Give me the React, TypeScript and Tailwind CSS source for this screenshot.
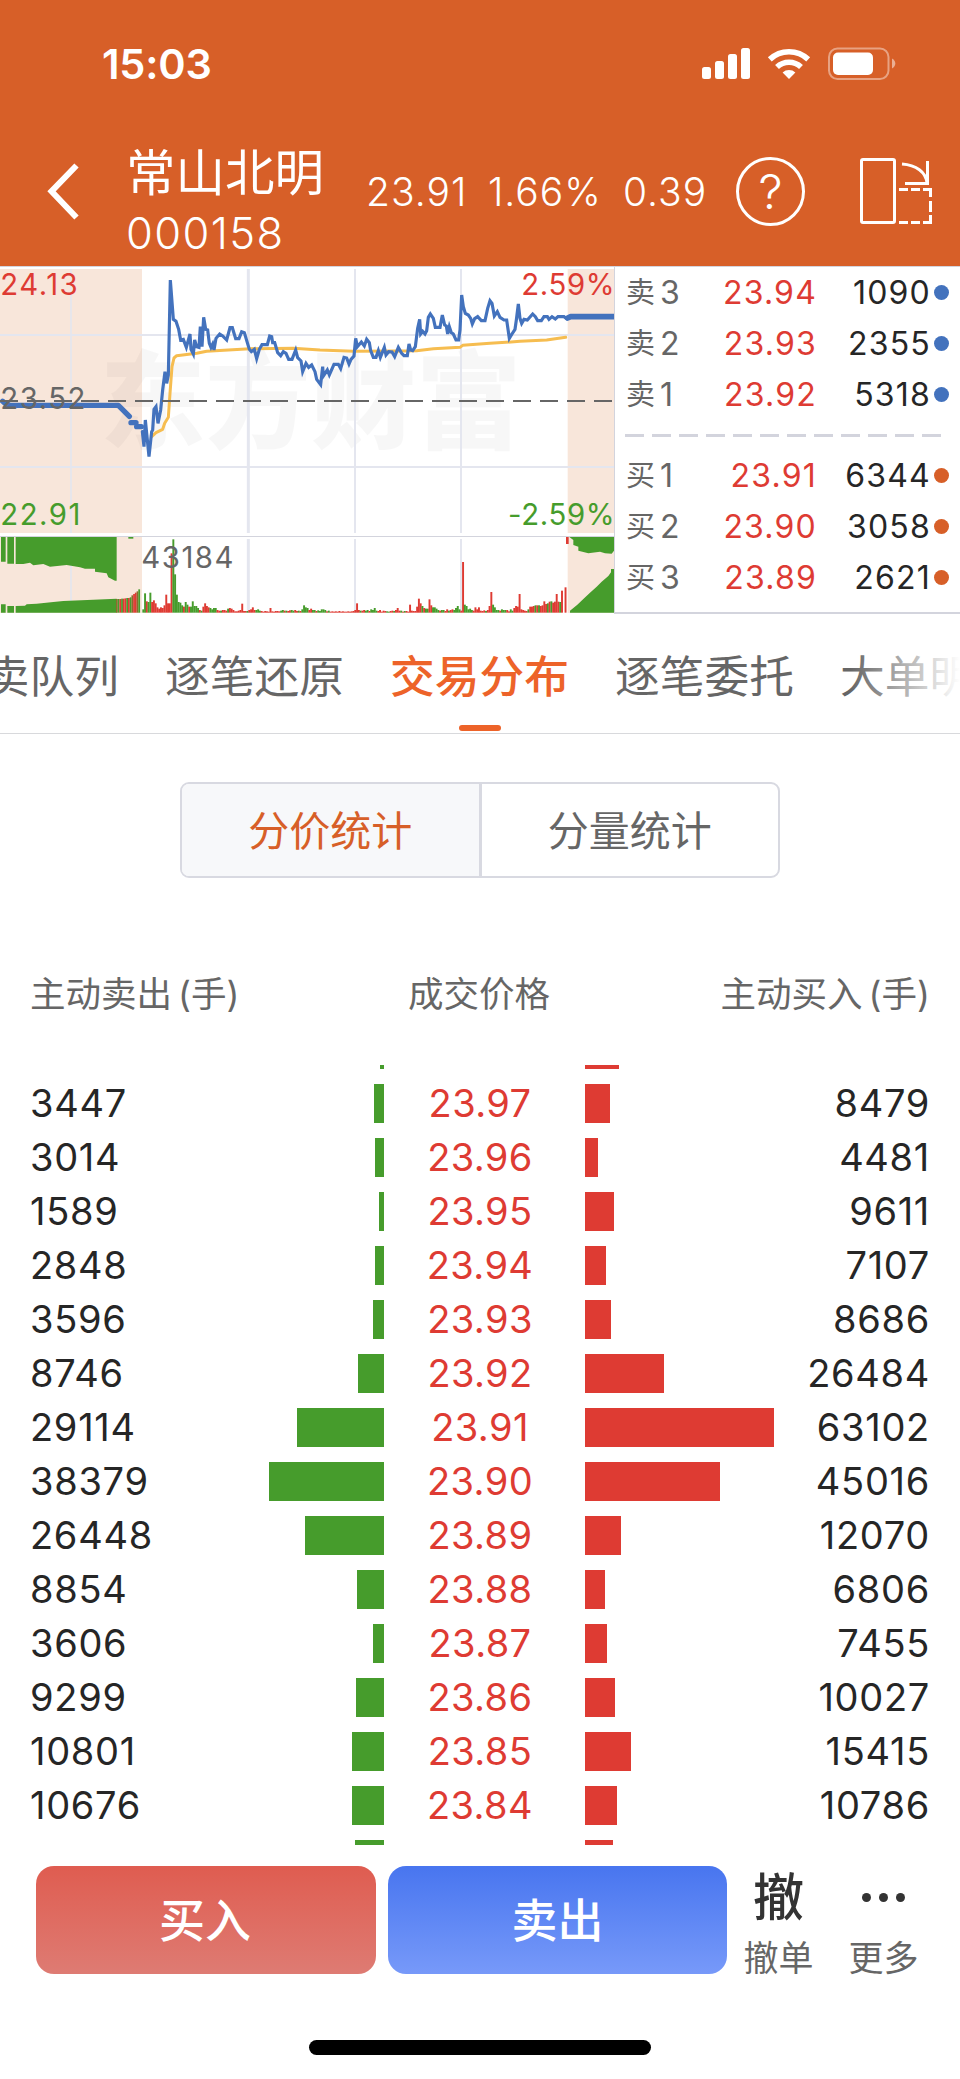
import clsx from "clsx";

const asks = [
  { label: "卖", level: 3, price: "23.94", volume: 1090 },
  { label: "卖", level: 2, price: "23.93", volume: 2355 },
  { label: "卖", level: 1, price: "23.92", volume: 5318 },
];

const bids = [
  { label: "买", level: 1, price: "23.91", volume: 6344 },
  { label: "买", level: 2, price: "23.90", volume: 3058 },
  { label: "买", level: 3, price: "23.89", volume: 2621 },
];

const tabs = ["买卖队列", "逐笔还原", "交易分布", "逐笔委托", "大单明细"];

const rows = [
  { price: "23.97", sell: 3447, buy: 8479 },
  { price: "23.96", sell: 3014, buy: 4481 },
  { price: "23.95", sell: 1589, buy: 9611 },
  { price: "23.94", sell: 2848, buy: 7107 },
  { price: "23.93", sell: 3596, buy: 8686 },
  { price: "23.92", sell: 8746, buy: 26484 },
  { price: "23.91", sell: 29114, buy: 63102 },
  { price: "23.90", sell: 38379, buy: 45016 },
  { price: "23.89", sell: 26448, buy: 12070 },
  { price: "23.88", sell: 8854, buy: 6806 },
  { price: "23.87", sell: 3606, buy: 7455 },
  { price: "23.86", sell: 9299, buy: 10027 },
  { price: "23.85", sell: 10801, buy: 15415 },
  { price: "23.84", sell: 10676, buy: 10786 },
];

// px per traded lot
const BAR_SCALE = 0.003;

const PRICE_LINE =
  "427,515 432,560 436,480 447,590 455,515 458,510 462,448 468,440 474,490 482,450 488,390 495,335 500,370 505,345 511,60 520,178 528,184 536,208 542,240 550,238 559,262 570,222 573,268 580,282 584,240 590,260 597,262 601,200 606,260 611,172 617,208 623,210 628,250 633,262 638,252 642,270 648,235 659,222 668,228 680,240 690,203 697,203 707,236 717,236 725,215 733,218 748,268 754,275 763,268 770,296 778,268 786,254 802,254 809,228 815,230 818,248 824,248 833,278 842,287 850,275 858,280 866,298 876,298 887,270 893,293 903,303 908,335 918,310 926,322 935,315 945,335 950,358 962,374 968,320 970,348 982,330 988,345 1002,313 1015,313 1022,326 1032,292 1040,294 1047,312 1053,298 1062,288 1067,235 1072,260 1084,246 1093,258 1100,238 1108,248 1112,272 1120,292 1128,292 1135,272 1141,292 1153,262 1158,285 1166,275 1176,276 1184,290 1195,262 1205,280 1212,287 1222,287 1227,252 1232,270 1238,272 1246,260 1253,205 1259,178 1262,222 1268,214 1275,222 1280,212 1285,172 1291,162 1300,175 1306,202 1320,202 1327,165 1334,195 1339,198 1343,222 1348,200 1354,218 1360,222 1368,240 1376,240 1380,210 1385,105 1390,140 1396,160 1405,165 1412,175 1417,192 1424,176 1433,170 1444,182 1455,182 1463,145 1470,122 1476,130 1483,168 1492,155 1500,172 1512,180 1520,180 1528,235 1536,222 1545,208 1549,180 1555,132 1560,175 1565,190 1572,178 1582,180 1598,162 1606,170 1613,182 1624,182 1632,170 1642,170 1647,178 1656,170 1666,177 1674,170 1692,170 1700,176";

const AVG_LINE =
  "455,530 468,518 488,508 494,490 505,472 510,400 516,320 522,294 530,287 590,280 620,274 750,266 880,265 960,270 1060,274 1200,273 1250,272 1300,266 1380,262 1388,256 1470,250 1560,244 1640,240 1697,232";

// One entry per minute; negative values are falling minutes (green)
const minuteVolume = [
  -10, -58, 34, -32, -60, 32, 37, 28, 16, 12, 16, 14, 22, 54, 28, 28, 178, -220, -115, -54,
  -32, -30, -22, 18, -32, -24, 18, -18, -34, -20, -20, -14, 8, -6, 18, 28, 20, 16, -14, -10,
  -14, -14, 8, 6, -6, 8, 8, 6, -12, 14, 12, 8, 4, 4, 6, 8, 27, 5, 5, -5,
  8, 10, 16, 8, -8, -10, -6, 5, 3, 5, 4, 3, 14, 4, 3, 5, 5, 4, -6, -8,
  6, -6, 5, 7, -8, -6, 8, 5, -6, 5, -10, -22, -16, -14, 8, 12, -8, -8, 5, -7,
  -5, -10, -10, -8, 4, -6, 3, 4, 3, 4, 3, 5, 3, 4, 3, 3, 4, 3, 4, 5,
  8, 28, 8, -6, 6, 8, -6, -8, 5, -10, -8, -14, -6, 5, 8, 3, 6, 5, -4, -3,
  5, 6, -5, 8, 14, 6, -6, 3, -5, 5, 3, 24, 6, 5, 5, 18, 42, 28, -20, 14,
  -12, -12, 40, 22, -16, -16, -12, -8, 6, -8, -8, 5, 10, -6, 8, 10, -8, -14, -20, -10,
  6, 152, -24, -20, -10, -12, -8, 6, 16, 10, 16, 6, 5, 7, -5, 8, 20, 62, -24, -16,
  -8, -8, 6, -10, -8, -8, 8, 4, -10, -6, 14, 20, 18, 56, 10, 8, 6, 5, -10, 18,
  18, 20, -22, 22, -22, 20, 22, 34, 26, -28, 33, -34, 30, 33, 56, 33, -32, 66, 0, 76,
];

// Opening auction bars left of 9:30
const auctionVolume = [41, -41, 41, -42, 42, 43, -44, 44, -46, 52, 56, 60, 64, -70];

function StatusIcons() {
  return (
    <svg width="196" height="36" viewBox="700 46 196 36" className="mt-[46px]">
      <g fill="white">
        <rect x="702" y="67" width="9" height="12" rx="2.5" />
        <rect x="715" y="61" width="9" height="18" rx="2.5" />
        <rect x="728" y="54" width="9" height="25" rx="2.5" />
        <rect x="741" y="48" width="9" height="31" rx="2.5" />
        <path d="M789 79 L782.6 72.4 A9.5 9.5 0 0 1 795.4 72.4 Z" />
      </g>
      <g fill="none" stroke="white" strokeWidth="5.6">
        <path d="M777 67 A17.5 17.5 0 0 1 801 67" />
        <path d="M769.8 59.4 A28 28 0 0 1 808.2 59.4" />
      </g>
      <rect x="829" y="48.5" width="59.5" height="30.5" rx="8.5" fill="none" stroke="white" strokeOpacity="0.42" strokeWidth="2" />
      <rect x="833" y="52.5" width="40" height="22.5" rx="5" fill="white" />
      <path d="M892 58.5 Q895.3 60.5 895.3 63.5 Q895.3 66.5 892 68.5 Z" fill="white" fillOpacity="0.5" />
    </svg>
  );
}

function Header() {
  return (
    <header className="h-[266px] bg-[#d75f28] text-white">
      <div className="flex h-[128px] justify-between pr-[64px] pl-[102px]">
        <span className="mt-[39px] text-[41.5px] leading-[50px] font-semibold tracking-[-0.2px]">15:03</span>
        <StatusIcons />
      </div>
      <div className="flex h-[138px] items-start">
        <svg width="34" height="60" viewBox="46 162 34 60" className="mt-[34px] ml-[46px]">
          <path d="M76.5 165.5 L51.5 191.3 L76.5 217.5" fill="none" stroke="white" strokeWidth="6" />
        </svg>
        <div className="mt-[20px] ml-[46px] w-[240px]">
          <p className="text-[49.5px] leading-[50px]">常山北明</p>
          <p className="mt-[9px] text-[43.5px] leading-[52px] font-[350] tracking-[1.4px]">000158</p>
        </div>
        <div className="mt-[40px] flex text-[39px] leading-[48px] font-[350] tracking-[1px]">
          <span className="w-[122px]">23.91</span>
          <span className="w-[135px]">1.66%</span>
          <span className="w-[113px]">0.39</span>
        </div>
        <span className="mt-[29px] flex size-[69px] shrink-0 items-center justify-center rounded-full border-[3px] border-white text-[48px] leading-none font-light">
          ?
        </span>
        <svg width="76" height="70" viewBox="858 156 76 70" className="mt-[28px] ml-[53px] shrink-0" fill="none" stroke="white" strokeWidth="3">
          <rect x="861.5" y="159.5" width="33" height="63" rx="1.5" />
          <path d="M902 164 C916 165 926 172 927 183 M927.5 161 V183.5 H905" />
          <path d="M899 189.5 H908 M911 189.5 H920 M923 189.5 H930.5 V197 M930.5 201 V212 M930.5 215 V222.5 H923 M920 222.5 H911 M908 222.5 H899" />
        </svg>
      </div>
    </header>
  );
}

function IntradayChart() {
  return (
    // viewBox is in 3x units
    <svg width="614" height="347" viewBox="0 18 1842 1041" className="shrink-0">
      <rect x="0" y="27" width="426" height="792" fill="#f8e6da" />
      <rect x="1703" y="27" width="139" height="792" fill="#f8e6da" />
      <rect x="0" y="831" width="426" height="228" fill="#f8e6da" />
      <rect x="1703" y="831" width="139" height="228" fill="#f8e6da" />
      <text x="300" y="540" fontSize="316" fontWeight="900" fill="#000" fillOpacity="0.03">
        东方财富
      </text>
      <g stroke="#e4e6ef">
        <path d="M0 225 H1842 M0 621 H1842" strokeWidth="6" />
        <path d="M213 27 V819 M213 837 V1058" strokeWidth="5" />
        <path d="M745 27 V819 M745 837 V1058" strokeWidth="9" />
        <path d="M1065 27 V819 M1065 837 V1058" strokeWidth="6" />
        <path d="M1383 27 V819 M1383 837 V1058" strokeWidth="6" />
      </g>
      <path d="M0 19.5 H1842 M0 829.5 H1842" stroke="#d3d4dd" strokeWidth="3" />
      <g fill="none" strokeLinejoin="round" strokeLinecap="round">
        <polyline points={AVG_LINE} stroke="#f6bd50" strokeWidth="9" />
        <path d="M8 424 L22 436 H355 L388 469 M393 488 H408 M410 500 H424" stroke="#4372bd" strokeWidth="16" />
        <polyline points={PRICE_LINE} stroke="#4372bd" strokeWidth="9.5" strokeLinejoin="miter" />
        <path d="M1703 174 L1712 170 H1850" stroke="#4372bd" strokeWidth="17" />
      </g>
      <path d="M0 423 H1842" stroke="#666" strokeWidth="6" strokeDasharray="54 27" />

      <g fill="#469c2c">
        <path d="M3 831 H17 V905 H3 Z M22 831 H42 V911 H22 Z" />
        <path d="M47 831 V912 H70 L90 908 L100 916 L130 912 L150 920 L200 915 L240 922 L255 926 H285 V935 L320 940 L325 952 L345 962 H350 V831 Z" />
        <path d="M3 1058 V1033 H17 V1058 Z M22 1058 V1038 H42 V1058 Z" />
        <path d="M47 1058 V1038 L75 1037 L80 1033 L110 1031 L160 1026 L190 1023 L280 1019 L350 1016 V1058 Z" />
        <path d="M1708 831 L1720 840 V855 L1735 860 V872 L1765 880 L1800 875 L1815 880 L1835 881 L1842 872 V831 Z" />
        <path d="M1710 1058 V1052 L1732 1034 L1750 1017 L1770 998 L1790 980 L1805 965 L1825 948 L1833 937 V927 H1842 V1058 Z" />
        <path d="M385 831 H400 V836 H385 Z" />
      </g>
      <rect x="1698" y="831" width="8" height="21" fill="#de3b33" />
      {auctionVolume.map((v, i) => (
        <rect
          key={i}
          x={348 + i * 5.15}
          y={1058 - Math.abs(v)}
          width="5.3"
          height={Math.abs(v)}
          fill={v > 0 ? (i % 3 ? "#de3b33" : "#8d6a2c") : "#469c2c"}
        />
      ))}
      {minuteVolume.map((v, i) => (
        <rect
          key={i}
          x={427 + i * 5.3}
          y={1058 - Math.abs(v)}
          width="5.8"
          height={Math.abs(v)}
          fill={v > 0 ? "#de3b33" : "#469c2c"}
        />
      ))}

      <g fontSize="88" letterSpacing="4.5">
        <text x="1" y="104" fill="#de3b33">24.13</text>
        <text x="1" y="448" fill="#666">23.52</text>
        <text x="1" y="795" fill="#469c2c">22.91</text>
        <text x="1846" y="104" textAnchor="end" letterSpacing="2" fill="#de3b33">2.59%</text>
        <text x="1846" y="795" textAnchor="end" letterSpacing="2" fill="#469c2c">-2.59%</text>
        <text x="424" y="923" fill="#666">43184</text>
      </g>
    </svg>
  );
}

function QuoteRow({ quote, dot }: { quote: (typeof asks)[number]; dot: string }) {
  return (
    <div className="flex h-[51px] items-center text-[32px] leading-none tracking-[1.2px]">
      <span className="w-[34px] text-[29px] text-[#666]">{quote.label}</span>
      <span className="w-[51px] text-[#666]">{quote.level}</span>
      <span className="w-[106px] text-right text-[#de3b33]">{quote.price}</span>
      <span className="flex-1 text-right text-[#262626]">{quote.volume}</span>
      <span className={clsx("ml-[3px] size-[15px] rounded-full", dot)} />
    </div>
  );
}

function OrderBook() {
  return (
    <div className="flex-1 border-t border-b-2 border-l border-[#d3d4dd] pr-[11px] pl-[11px]">
      {asks.map((q) => (
        <QuoteRow key={q.price} quote={q} dot="bg-[#4372bd]" />
      ))}
      <svg width="316" height="3" className="mt-[14px] mb-[13px] -ml-px block">
        <path d="M0 1.5 H316" stroke="#d3d4dd" strokeWidth="3" strokeDasharray="19 8" />
      </svg>
      {bids.map((q) => (
        <QuoteRow key={q.price} quote={q} dot="bg-[#d75f28]" />
      ))}
    </div>
  );
}

function TabBar() {
  return (
    <nav className="relative h-[120px] overflow-hidden border-b border-[#d8d9dc]">
      <div className="-ml-[60px] flex w-max gap-[46px] pt-[33px]">
        {tabs.map((tab) => {
          const active = tab === "交易分布";
          return (
            <div key={tab} className="flex w-[179px] flex-col items-center">
              <span
                className={clsx(
                  "text-[44.7px] leading-[60px] whitespace-nowrap",
                  active ? "font-medium text-[#ed6329]" : "text-[#666]",
                )}
              >
                {tab}
              </span>
              {active && <span className="mt-[18px] h-[6px] w-[42px] rounded-full bg-[#ed6329]" />}
            </div>
          );
        })}
      </div>
      <div className="absolute inset-y-0 right-0 w-[110px] bg-linear-to-r from-white/0 to-white" />
    </nav>
  );
}

function Segmented() {
  return (
    <div className="mx-auto mt-[48px] flex h-[96px] w-[600px] overflow-hidden rounded-[9px] border-2 border-[#d8d9e1] text-[41px]">
      <div className="flex flex-1 items-center justify-center border-r-3 border-[#d8d9e1] bg-[#f7f8fa] pt-[3px] text-[#d75f28]">
        分价统计
      </div>
      <div className="flex flex-1 items-center justify-center pt-[3px] text-[#666]">分量统计</div>
    </div>
  );
}

function DistributionRow({ row }: { row: (typeof rows)[number] }) {
  return (
    <div className="flex h-[54px] items-center text-[38px] leading-[39px] tracking-[0.7px] text-[#262626]">
      <span className="w-[202px]">{row.sell}</span>
      <div className="flex w-[152px] justify-end">
        <div className="h-[39px] bg-[#469c2c]" style={{ width: row.sell * BAR_SCALE }} />
      </div>
      <span className="w-[201px] pr-[9px] text-center tracking-[0.4px] text-[#de3b33]">{row.price}</span>
      <div className="w-[190px]">
        <div className="h-[39px] bg-[#de3b33]" style={{ width: row.buy * BAR_SCALE }} />
      </div>
      <span className="flex-1 text-right">{row.buy}</span>
    </div>
  );
}

function Distribution() {
  return (
    <section className="px-[30px]">
      <div className="mt-[90px] grid h-[52px] grid-cols-3 items-center text-[35.5px] text-[#666]">
        <span>
          主动卖出<span className="ml-[6px]">(手)</span>
        </span>
        <span className="pr-[2px] text-center">成交价格</span>
        <span className="text-right">
          主动买入<span className="ml-[6px]">(手)</span>
        </span>
      </div>
      {/* list is scrolled, so the rows above and below are cut off */}
      <div className="mt-[45px] h-[780px] overflow-hidden">
        <div className="flex h-[4px]">
          <div className="ml-[350px] w-[4px] bg-[#469c2c]" />
          <div className="ml-[201px] w-[34px] bg-[#de3b33]" />
        </div>
        <div className="mt-[7.5px]">
          {rows.map((row) => (
            <DistributionRow key={row.price} row={row} />
          ))}
        </div>
        <div className="mt-[7.5px] flex h-[5px]">
          <div className="ml-[325px] w-[29px] bg-[#469c2c]" />
          <div className="ml-[201px] w-[28px] bg-[#de3b33]" />
        </div>
      </div>
    </section>
  );
}

function ActionBar() {
  return (
    <footer className="mt-[21px] flex pl-[36px]">
      <button className="h-[108px] w-[340px] rounded-[18px] bg-linear-to-b from-[#df5c50] to-[#de7b73] pr-[2px] text-[46px] font-medium text-white">
        买入
      </button>
      <button className="ml-[12px] h-[108px] w-[339px] rounded-[18px] bg-linear-to-b from-[#4875ef] to-[#7799f9] text-[46px] font-medium text-white">
        卖出
      </button>
      <div className="ml-[16px] flex w-[71px] flex-col items-center">
        <span className="h-[66px] text-[51px] leading-[63px] font-medium text-[#333]">撤</span>
        <span className="text-[35px] leading-[52px] whitespace-nowrap text-[#666]">撤单</span>
      </div>
      <div className="ml-[34px] flex w-[71px] flex-col items-center">
        <span className="flex h-[66px] items-center gap-[8px] pb-[4px]">
          <i className="size-[9px] rounded-full bg-[#333]" />
          <i className="size-[9px] rounded-full bg-[#333]" />
          <i className="size-[9px] rounded-full bg-[#333]" />
        </span>
        <span className="text-[35px] leading-[52px] whitespace-nowrap text-[#666]">更多</span>
      </div>
    </footer>
  );
}

export default function App() {
  return (
    <div className="flex h-[2079px] w-[960px] flex-col overflow-hidden bg-white font-['Inter','Noto_Sans_CJK_SC',sans-serif]">
      <Header />
      <div className="flex h-[348px]">
        <IntradayChart />
        <OrderBook />
      </div>
      <TabBar />
      <Segmented />
      <Distribution />
      <ActionBar />
      <div className="mx-auto mt-[56px] h-[15px] w-[342px] shrink-0 rounded-full bg-black" />
    </div>
  );
}
